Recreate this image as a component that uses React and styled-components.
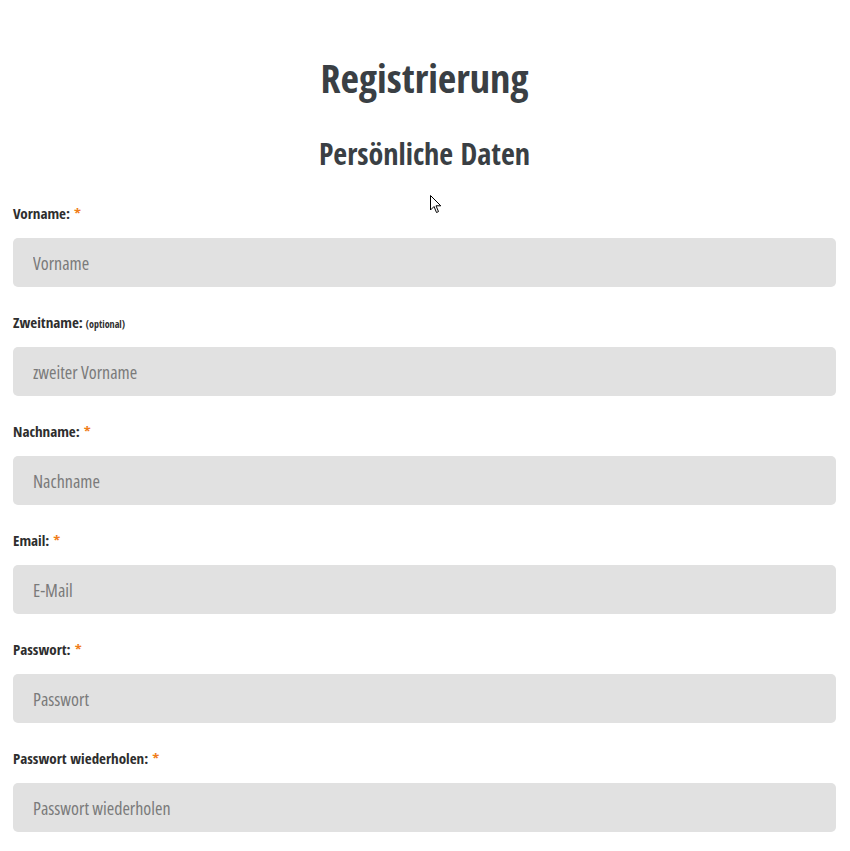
import React from "react";
import styled, { createGlobalStyle } from "styled-components";

const GlobalStyle = createGlobalStyle`
  html, body {
    margin: 0;
    padding: 0;
    background: #ffffff;
  }
  body {
    font-family: "Open Sans Condensed", "Roboto Condensed", "DejaVu Sans Condensed", sans-serif;
  }
  * {
    box-sizing: border-box;
  }
`;

const Page = styled.div`
  position: relative;
  padding: 54px 14px 20px 13px;
`;

const Title = styled.h1`
  margin: 0;
  font-size: 40px;
  line-height: 48px;
  font-weight: 700;
  color: #3a3f44;
  text-align: center;
`;

const SectionTitle = styled.h2`
  margin: 34px 0 0;
  font-size: 30px;
  line-height: 36px;
  font-weight: 700;
  color: #3a3f44;
  text-align: center;
`;

const Form = styled.form`
  display: flex;
  flex-direction: column;
  gap: 25px;
  margin-top: 31px;
`;

const Field = styled.div`
  display: flex;
  flex-direction: column;
  gap: 15px;
`;

const Label = styled.label`
  display: block;
  height: 20px;
  font-size: 15px;
  line-height: 20px;
  font-weight: 700;
  color: #2e2e2e;
`;

const Required = styled.span`
  color: #f07d1b;
  margin-left: 4px;
`;

const Optional = styled.span`
  font-size: 10px;
  line-height: 1;
  margin-left: 3px;
`;

const Input = styled.input`
  width: 100%;
  height: 49px;
  border: none;
  outline: none;
  border-radius: 5px;
  background: #e1e1e1;
  padding: 0 20px;
  font-family: "Open Sans", "Roboto Condensed", sans-serif;
  font-stretch: 75%;
  font-weight: 400;
  font-size: 18px;
  color: #333;

  &::placeholder {
    color: #7a7a7a;
  }
`;

const Cursor = styled.svg`
  position: absolute;
  left: 430px;
  top: 195px;
  pointer-events: none;
`;

const fields = [
  { id: "vorname", label: "Vorname:", placeholder: "Vorname", required: true },
  { id: "zweitname", label: "Zweitname:", placeholder: "zweiter Vorname", optional: true },
  { id: "nachname", label: "Nachname:", placeholder: "Nachname", required: true },
  { id: "email", label: "Email:", placeholder: "E-Mail", required: true, type: "email" },
  { id: "passwort", label: "Passwort:", placeholder: "Passwort", required: true, type: "password" },
  {
    id: "passwort2",
    label: "Passwort wiederholen:",
    placeholder: "Passwort wiederholen",
    required: true,
    type: "password",
  },
];

export default function App() {
  return (
    <>
      <GlobalStyle />
      <Page>
        <Title>Registrierung</Title>
        <SectionTitle>Persönliche Daten</SectionTitle>
        <Form onSubmit={(e) => e.preventDefault()}>
          {fields.map((f) => (
            <Field key={f.id}>
              <Label htmlFor={f.id}>
                {f.label}
                {f.required && <Required>*</Required>}
                {f.optional && <Optional>(optional)</Optional>}
              </Label>
              <Input id={f.id} type={f.type || "text"} placeholder={f.placeholder} />
            </Field>
          ))}
        </Form>
        <Cursor width="12" height="20" viewBox="0 0 12 20">
          <path
            d="M0.5 0.5 L0.5 15 L4 11.5 L6.5 17.5 L8.5 16.6 L6 10.8 L10.8 10.8 Z"
            fill="#fff"
            stroke="#000"
            strokeWidth="1"
            strokeLinejoin="round"
          />
        </Cursor>
      </Page>
    </>
  );
}
